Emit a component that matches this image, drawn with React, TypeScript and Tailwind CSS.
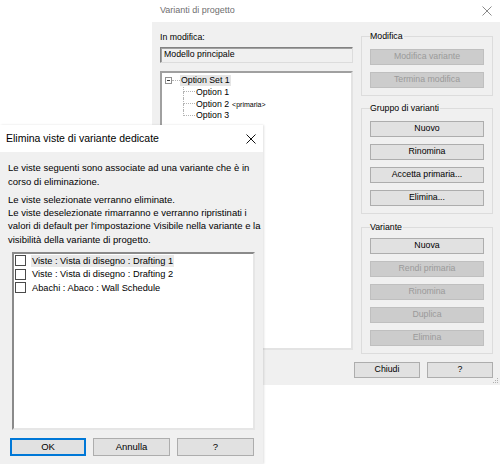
import React from 'react';

const font = { fontFamily: '"Liberation Sans", Arial, sans-serif' };

function CloseGlyph({ color }: { color: string }) {
  return (
    <svg width="10" height="10" viewBox="0 0 10 10">
      <path d="M0.5 0.5L9.5 9.5M9.5 0.5L0.5 9.5" stroke={color} strokeWidth="1" fill="none" />
    </svg>
  );
}

function WinButton({ label, disabled }: { label: string; disabled?: boolean }) {
  return (
    <div
      className={
        'h-[16px] w-full border flex items-center justify-center text-[8.75px] ' +
        (disabled
          ? 'bg-[#cccccc] border-[#bfbfbf] text-[#9a9a9a]'
          : 'bg-[#e1e1e1] border-[#adadad] text-black')
      }
    >
      {label}
    </div>
  );
}

function Group({
  title,
  children,
  className,
}: {
  title: string;
  children: React.ReactNode;
  className?: string;
}) {
  return (
    <fieldset className={'border border-[#dcdcdc] px-[8px] pb-[7px] ' + (className ?? '')}>
      <legend className="text-[8.75px] leading-[10px] text-black pr-[1px]">{title}</legend>
      <div className="flex flex-col gap-[7px]">{children}</div>
    </fieldset>
  );
}

function TreeChild({ label, extra, last }: { label: string; extra?: string; last?: boolean }) {
  return (
    <div className="flex h-[11.7px] items-stretch">
      <div className="w-[21px]" />
      <div className="w-[12px] flex flex-col">
        <div className="h-1/2 border-l border-b border-dotted border-[#b4b4b4]" />
        <div className={'h-1/2 ' + (last ? '' : 'border-l border-dotted border-[#b4b4b4]')} />
      </div>
      <div className="ml-[1px] flex items-center gap-[3px] text-[8.75px] leading-none">
        <span>{label}</span>
        {extra && <span className="text-[7px]">{extra}</span>}
      </div>
    </div>
  );
}

function BackWindow() {
  return (
    <div className="absolute left-[152px] top-0 w-[348px] h-[385px] flex flex-col" style={font}>
      <div className="h-[22px] bg-white flex items-center justify-between pl-[8px] pr-[8px]">
        <span className="text-[9px] text-[#6f6f6f]">Varianti di progetto</span>
        <CloseGlyph color="#8a8a8a" />
      </div>
      <div className="relative flex-1 bg-[#f0f0f0] flex flex-col pl-[8px] pr-[7px] pt-[9px] pb-[7px]">
        <div className="flex gap-[8px]">
          {/* left column */}
          <div className="w-[193px] flex flex-col">
            <div className="text-[8.75px] leading-[10px] text-black mt-[1px]">In modifica:</div>
            <div className="mt-[5px] h-[16px] bg-[#f0f0f0] border border-t-[#828282] border-l-[#828282] border-r-[#dcdcdc] border-b-[#dcdcdc] shadow-[inset_1px_1px_0_#a0a0a0] flex items-center pl-[3px] text-[8.75px]">
              Modello principale
            </div>
            <div className="mt-[8px] h-[279px] pt-[1px] bg-white border-2 border-t-[#a0a0a0] border-l-[#a0a0a0] border-r-[#e3e3e3] border-b-[#e3e3e3] text-black">
              <div className="flex h-[12.5px] items-center">
                <div className="ml-[3px] w-[7px] h-[7px] border border-[#919191] bg-white flex items-center justify-center">
                  <div className="w-[3px] h-px bg-[#3a3a3a]" />
                </div>
                <div className="w-[8px] border-t border-dotted border-[#b4b4b4]" />
                <span className="bg-[#e5e5e5] px-[1px] text-[8.75px] leading-[11px]">Option Set 1</span>
              </div>
              <TreeChild label="Option 1" />
              <TreeChild label="Option 2" extra="<primaria>" />
              <TreeChild label="Option 3" last />
            </div>
          </div>
          {/* right column */}
          <div className="w-[132px] flex flex-col">
            <Group title="Modifica" className="pt-[8px]">
              <WinButton label="Modifica variante" disabled />
              <WinButton label="Termina modifica" disabled />
            </Group>
            <Group title="Gruppo di varianti" className="mt-[7px] pt-[8px]">
              <WinButton label="Nuovo" />
              <WinButton label="Rinomina" />
              <WinButton label="Accetta primaria..." />
              <WinButton label="Elimina..." />
            </Group>
            <Group title="Variante" className="mt-[8px] pt-[6px] pb-[6px]">
              <WinButton label="Nuova" />
              <WinButton label="Rendi primaria" disabled />
              <WinButton label="Rinomina" disabled />
              <WinButton label="Duplica" disabled />
              <WinButton label="Elimina" disabled />
            </Group>
          </div>
        </div>
        <div className="mt-auto flex justify-end gap-[7px]">
          <div className="w-[66px]">
            <WinButton label="Chiudi" />
          </div>
          <div className="w-[66px]">
            <WinButton label="?" />
          </div>
        </div>
        <svg className="absolute right-[1px] bottom-[1px]" width="6" height="6" viewBox="0 0 6 6">
          <rect x="4" y="0" width="1" height="1" fill="#b0b0b0" />
          <rect x="2" y="2" width="1" height="1" fill="#b0b0b0" />
          <rect x="4" y="2" width="1" height="1" fill="#b0b0b0" />
          <rect x="0" y="4" width="1" height="1" fill="#b0b0b0" />
          <rect x="2" y="4" width="1" height="1" fill="#b0b0b0" />
          <rect x="4" y="4" width="1" height="1" fill="#b0b0b0" />
        </svg>
      </div>
    </div>
  );
}

const items = [
  'Viste : Vista di disegno : Drafting 1',
  'Viste : Vista di disegno : Drafting 2',
  'Abachi : Abaco : Wall Schedule',
];

function DialogButton({ label, isDefault }: { label: string; isDefault?: boolean }) {
  return (
    <div
      className={
        'h-[18px] bg-[#e1e1e1] border flex items-center justify-center text-[9.5px] text-black ' +
        (isDefault ? 'border-[#0078d7] shadow-[inset_0_0_0_1px_#0078d7]' : 'border-[#adadad]') +
        (label === 'OK' ? ' w-[76px]' : ' w-[77px]')
      }
    >
      {label}
    </div>
  );
}

function FrontDialog() {
  return (
    <div
      className="absolute left-0 top-[125px] w-[263px] h-[339px] flex flex-col shadow-[1px_0_2px_rgba(0,0,0,0.12)]"
      style={font}
    >
      <div className="h-[27px] bg-white flex items-center justify-between pl-[6px] pr-[7px]">
        <span className="text-[10.5px] text-black">Elimina viste di variante dedicate</span>
        <CloseGlyph color="#111111" />
      </div>
      <div className="flex-1 bg-[#f0f0f0] flex flex-col px-[8px] pt-[9px] pb-[8px] text-black">
        <div className="text-[9.5px] leading-[13.5px] whitespace-nowrap">
          <div>Le viste seguenti sono associate ad una variante che è in</div>
          <div>corso di eliminazione.</div>
        </div>
        <div className="mt-[5px] text-[9.5px] leading-[13.2px] whitespace-nowrap">
          <div>Le viste selezionate verranno eliminate.</div>
          <div>Le viste deselezionate rimarranno e verranno ripristinati i</div>
          <div>valori di default per l'impostazione Visibile nella variante e la</div>
          <div>visibilità della variante di progetto.</div>
        </div>
        <div className="mt-[6px] ml-[4px] w-[243px] h-[178px] bg-white border-2 border-t-[#8a8a8a] border-l-[#8a8a8a] border-r-[#e6e6e6] border-b-[#e6e6e6]">
          {items.map((it, i) => (
            <div key={it} className="h-[13.5px] flex items-center">
              <div className="ml-[1px] w-[11px] h-[11px] border border-[#4a4a4a] bg-white" />
              <span
                className={
                  'ml-[5px] px-[1px] text-[9.25px] leading-[12px] ' + (i === 0 ? 'bg-[#e8e8e8]' : '')
                }
              >
                {it}
              </span>
            </div>
          ))}
        </div>
        <div className="mt-[8px] ml-[2px] flex gap-[7px]">
          <DialogButton label="OK" isDefault />
          <DialogButton label="Annulla" />
          <DialogButton label="?" />
        </div>
      </div>
    </div>
  );
}

export default function App() {
  return (
    <div className="relative w-[500px] h-[464px] bg-white overflow-hidden">
      <BackWindow />
      <FrontDialog />
    </div>
  );
}
